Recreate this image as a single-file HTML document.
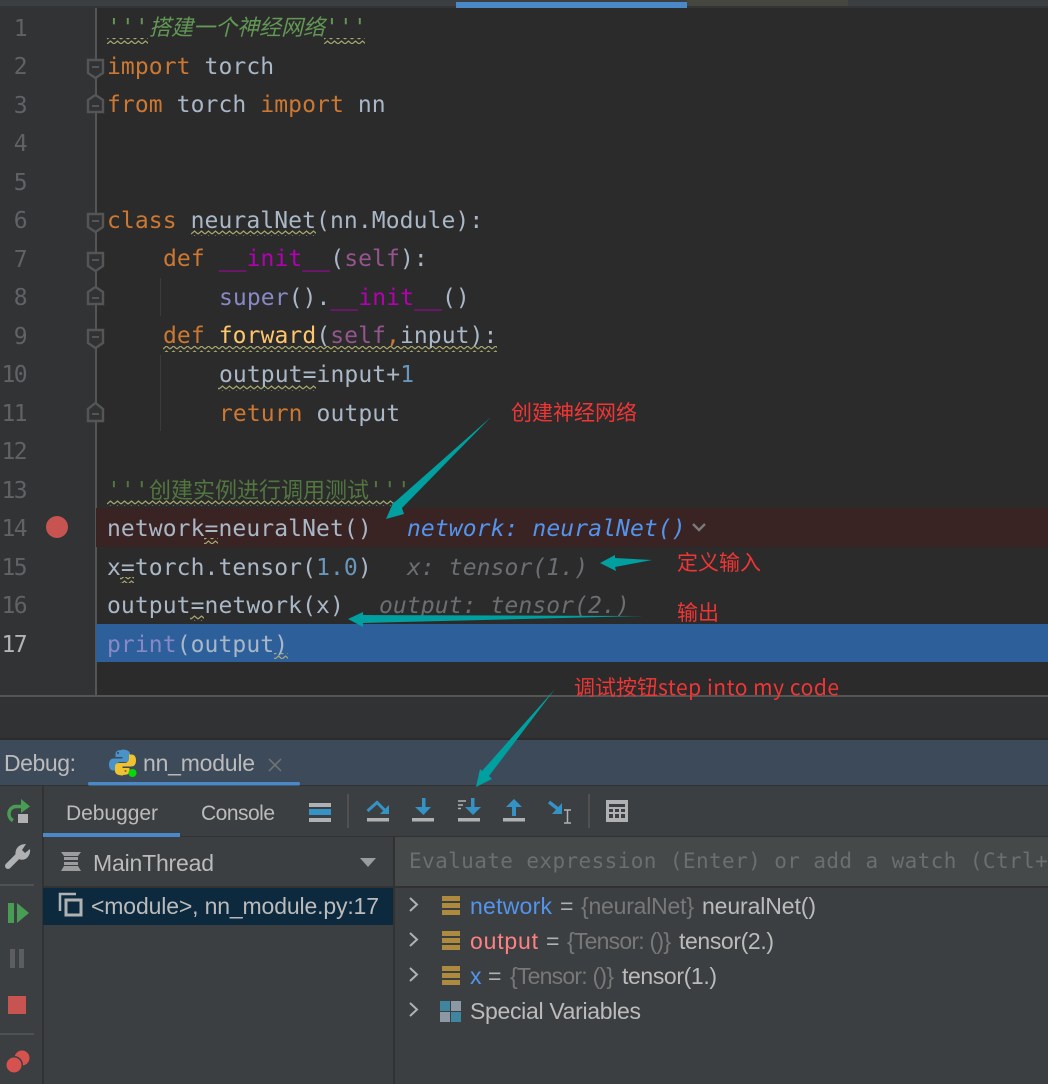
<!DOCTYPE html>
<html><head><meta charset="utf-8"><style>
html,body{margin:0;padding:0;background:#2b2b2b;width:1048px;height:1084px;overflow:hidden}
svg{display:block;position:absolute;left:0;top:0}
.c{font-family:"DejaVu Sans Mono","Noto Sans CJK SC",monospace;font-size:23px;letter-spacing:.09px;fill:#a9b7c6;white-space:pre}
.z{letter-spacing:0;font-size:22px;font-family:"Noto Sans CJK SC",sans-serif}
.k{fill:#cc7832}.m{fill:#b200b2}.s{fill:#94558d}.b{fill:#8888c6}.n{fill:#6897bb}.f{fill:#ffc66d}
.ln{font-family:"DejaVu Sans Mono",monospace;font-size:23px;letter-spacing:-1.6px;fill:#606366;text-anchor:end}
.u{font-family:"Liberation Sans",sans-serif;font-size:23px;fill:#bbbbbb}
.a{font-family:"Noto Sans CJK SC",sans-serif;font-size:21px;fill:#f03535}
.h{font-family:"DejaVu Sans Mono",monospace;font-size:23px;font-style:italic;letter-spacing:.09px;fill:#6b6f72;white-space:pre}
</style></head><body>
<svg width="1048" height="1084" viewBox="0 0 1048 1084" xmlns="http://www.w3.org/2000/svg">
<defs>
<pattern id="w" width="7" height="5" patternUnits="userSpaceOnUse" x="107"><path d="M0 4L3.5 1L7 4" fill="none" stroke="#a8a870" stroke-width="1.2"/></pattern>
</defs>
<!-- base -->
<rect width="1048" height="1084" fill="#2b2b2b"/>
<rect width="1048" height="6" fill="#3c3f41"/>
<rect y="6" width="1048" height="2" fill="#333537"/>
<rect x="687" y="0" width="161" height="6" fill="#46473f"/>
<rect x="456" y="2" width="231" height="6" fill="#4a88c7"/>
<rect y="8" width="95" height="687" fill="#313335"/>
<rect x="95" y="8" width="2" height="687" fill="#555555"/>

<!-- highlights -->
<rect x="96" y="508" width="952" height="39" fill="#3a2323"/>
<rect x="96" y="624" width="952" height="38" fill="#2d5f9a"/>
<rect x="160" y="278" width="1" height="38" fill="#3b3b3b"/>
<rect x="160" y="355" width="1" height="76" fill="#3b3b3b"/>

<!-- line numbers -->
<text class="ln" x="26" y="36">1</text><text class="ln" x="26" y="74">2</text><text class="ln" x="26" y="113">3</text><text class="ln" x="26" y="151">4</text><text class="ln" x="26" y="190">5</text><text class="ln" x="26" y="228">6</text><text class="ln" x="26" y="267">7</text><text class="ln" x="26" y="305">8</text><text class="ln" x="26" y="344">9</text>
<text class="ln" x="26" y="382">10</text><text class="ln" x="26" y="421">11</text><text class="ln" x="26" y="459">12</text><text class="ln" x="26" y="498">13</text><text class="ln" x="26" y="536">14</text><text class="ln" x="26" y="575">15</text><text class="ln" x="26" y="613">16</text><text class="ln" x="26" y="652" style="fill:#b4b4b4">17</text>
<circle cx="57" cy="527" r="11" fill="#c75450"/>

<!-- folds -->
<g fill="#303233" stroke="#555555" stroke-width="2.4">
<path d="M88 60H103V73L95.500 78L88 73Z"/><path d="M88 112H103V100L95.500 95L88 100Z"/>
<path d="M88 214H103V227L95.500 232L88 227Z"/><path d="M88 253H103V266L95.500 271L88 266Z"/>
<path d="M88 304H103V292L95.500 287L88 292Z"/><path d="M88 330H103V343L95.500 348L88 343Z"/>
<path d="M88 421H103V409L95.500 403L88 409Z"/>
<path d="M92 67h7M92 106h7M92 221h7M92 260h7M92 298h7M92 337h7M92 414h7" stroke-width="2"/>
</g>

<!-- squiggles -->
<g fill="url(#w)">
<rect x="107" y="38" width="41" height="6"/><rect x="324" y="38" width="41" height="6"/>
<rect x="191" y="230" width="125" height="6"/><rect x="163" y="346" width="334" height="6"/>
<rect x="218" y="385" width="98" height="6"/><rect x="107" y="500" width="291" height="6"/>
<rect x="204" y="538" width="14" height="6"/><rect x="120" y="577" width="14" height="6"/>
<rect x="190" y="615" width="14" height="6"/><rect x="274" y="653" width="14" height="6"/>
</g>

<!-- code -->
<text class="c" x="107" y="35" style="fill:#629755;font-style:italic">'''<tspan class="z" x="149">搭建一个神经网络</tspan><tspan x="325">'''</tspan></text>
<text class="c" x="107" y="74"><tspan class="k">import</tspan> torch</text>
<text class="c" x="107" y="112"><tspan class="k">from</tspan> torch <tspan class="k">import</tspan> nn</text>
<text class="c" x="107" y="228"><tspan class="k">class</tspan> neuralNet(nn.Module):</text>
<text class="c" x="163" y="266"><tspan class="k">def</tspan> <tspan class="m">__init__</tspan>(<tspan class="s">self</tspan>):</text>
<text class="c" x="219" y="305"><tspan class="b">super</tspan>().<tspan class="m">__init__</tspan>()</text>
<text class="c" x="163" y="343"><tspan class="k">def</tspan> <tspan class="f">forward</tspan>(<tspan class="s">self</tspan><tspan class="k">,</tspan>input):</text>
<text class="c" x="219" y="382">output=input+<tspan class="n">1</tspan></text>
<text class="c" x="219" y="421"><tspan class="k">return</tspan> output</text>
<text class="c" x="107" y="498" style="fill:#52763f">'''<tspan class="z" x="149">创建实例进行调用测试</tspan><tspan x="369">'''</tspan></text>
<text class="c" x="107" y="536">network=neuralNet()</text>
<text class="c" x="107" y="575">x=torch.tensor(<tspan class="n">1.0</tspan>)</text>
<text class="c" x="107" y="613">output=network(x)</text>
<text class="c" x="107" y="652"><tspan class="b">print</tspan>(output)</text>

<!-- hints -->
<text class="h" x="407" y="536" style="fill:#5394ec">network: neuralNet()</text>
<text class="h" x="407" y="575">x: tensor(1.)</text>
<text class="h" x="379" y="613">output: tensor(2.)</text>
<path d="M693 524L699 530L705 524" fill="none" stroke="#7a7a7a" stroke-width="2.4"/>

<!-- lower band -->
<rect y="695" width="1048" height="2" fill="#555555"/>
<rect y="697" width="1048" height="41" fill="#313233"/>
<rect y="738" width="1048" height="2" fill="#2b2b2b"/>
<rect y="740" width="1048" height="45" fill="#3d4a5a"/>
<rect y="785" width="1048" height="299" fill="#3c3f41"/>
<rect y="785" width="1048" height="1" fill="#323232"/>
<rect x="42" y="786" width="2" height="298" fill="#323232"/>
<rect x="393" y="837" width="2" height="247" fill="#323232"/>
<rect x="44" y="836" width="1004" height="1" fill="#323232"/>
<rect x="395" y="837" width="653" height="49" fill="#45494a"/>
<rect x="44" y="886" width="1004" height="2" fill="#323232"/>
<rect x="43" y="888" width="350" height="37" fill="#0d293e"/>

<!-- Debug header -->
<text class="u" x="4" y="771" textLength="72">Debug:</text>
<rect x="88" y="782" width="212" height="3.500" rx="1.500" fill="#4a88c7"/>
<path d="M122 750c-6 0-6.500 2.500-6.500 4.500v2.500h7v1.500h-8.500c-4 0-5 3-5 6s1 6 4.500 6h2.500v-4c0-3 2-4.500 4.500-4.500h6c2 0 3.500-1.500 3.500-3.500v-4.500c0-2.500-2.500-4.500-8-4.500z" fill="#4a93c9"/>
<path d="M123 775c6 0 6.500-2.500 6.500-4.500v-2.500h-7v-1.500h8.500c4 0 5-3 5-6s-1-6-4.500-6h-2.500v4c0 3-2 4.500-4.500 4.500h-6c-2 0-3.500 1.500-3.500 3.500v4.500c0 2.500 2.500 4.500 8 4.500z" fill="#f0c22f"/>
<circle cx="118" cy="753" r="1" fill="#2b4a63"/>
<circle cx="125.500" cy="771" r="1" fill="#7d6715"/>
<circle cx="132.500" cy="773" r="4" fill="#08d808"/>
<text class="u" x="143" y="771" textLength="112">nn_module</text>
<path d="M269 759L281 771M281 759L269 771" stroke="#6f7274" stroke-width="1.600"/>

<!-- Left tool stripe -->
<path d="M22 806.500H15A7.500 7.500 0 0 0 13 820.500" fill="none" stroke="#499c54" stroke-width="3.500"/>
<path d="M21 799L30 806.500L21 813Z" fill="#499c54"/>
<rect x="18" y="814" width="10" height="9" fill="#afb1b3"/>
<path d="M8 866L19 855" stroke="#afb1b3" stroke-width="6" stroke-linecap="round"/>
<path d="M16 857C14 850 18 844 26 844L22 850L25 853L30 849C31 856 25 862 19 859Z" fill="#afb1b3"/>
<rect y="884" width="34" height="2" fill="#515151"/>
<rect x="8" y="903" width="6" height="20" fill="#499c54"/>
<path d="M17 903L29 913L17 923Z" fill="#499c54"/>
<rect x="10" y="949" width="5" height="19" fill="#5b5d5f"/><rect x="19" y="949" width="5" height="19" fill="#5b5d5f"/>
<rect x="8" y="996" width="18" height="18" fill="#c75450"/>
<rect y="1033" width="34" height="2" fill="#515151"/>
<circle cx="22" cy="1058" r="7.500" fill="#d5524e"/>
<circle cx="14" cy="1065" r="9" fill="#3c3f41"/>
<circle cx="14" cy="1065" r="7.500" fill="#d5524e"/>

<!-- Tabs -->
<text class="u" x="66" y="820" textLength="92" style="font-size:21px">Debugger</text>
<rect x="43" y="833" width="137" height="4" fill="#4a88c7"/>
<text class="u" x="201" y="820" textLength="74" style="font-size:21px">Console</text>
<rect x="309" y="803" width="22" height="4" fill="#afb1b3"/><rect x="309" y="809" width="22" height="6" fill="#3592c4"/><rect x="309" y="818" width="22" height="4" fill="#afb1b3"/>
<rect x="347" y="794" width="2" height="34" fill="#515151"/>

<!-- step over -->
<path d="M367.500 811L377 802.500L385.500 811" fill="none" stroke="#3592c4" stroke-width="3"/>
<path d="M389 805V814H380Z" fill="#3592c4"/><rect x="367" y="818" width="22" height="3.500" fill="#afb1b3"/>
<!-- step into -->
<rect x="422" y="798" width="3.500" height="10" fill="#3592c4"/><path d="M415 807H431L423.500 815Z" fill="#3592c4"/><rect x="412" y="818" width="22" height="3.500" fill="#afb1b3"/>
<!-- force into -->
<rect x="471" y="798" width="3.500" height="10" fill="#3592c4"/><path d="M465 807H481L473 815Z" fill="#3592c4"/><rect x="458" y="818" width="22" height="3.500" fill="#afb1b3"/>
<path d="M458 801h8M458 805h5M458 808.500h3" stroke="#afb1b3" stroke-width="1.500"/>
<!-- step out -->
<path d="M506 807H522L514 799Z" fill="#3592c4"/><rect x="512" y="807" width="4" height="9" fill="#3592c4"/><rect x="503" y="818" width="22" height="3.500" fill="#afb1b3"/>
<!-- run to cursor -->
<path d="M549 802L558 809" stroke="#3592c4" stroke-width="3.500"/><path d="M562 803V814H552Z" fill="#3592c4"/>
<path d="M564 810h7M564 823h7M567.500 810v13" fill="none" stroke="#afb1b3" stroke-width="1.500"/>
<rect x="588" y="794" width="2" height="34" fill="#515151"/>
<!-- calculator -->
<rect x="606" y="800" width="22" height="22" fill="#afb1b3"/>
<rect x="609" y="804" width="16" height="3" fill="#3c3f41"/>
<g fill="#3c3f41"><rect x="609" y="809" width="4" height="3"/><rect x="615" y="809" width="4" height="3"/><rect x="621" y="809" width="4" height="3"/><rect x="609" y="814" width="4" height="4"/><rect x="615" y="814" width="4" height="4"/><rect x="621" y="814" width="4" height="4"/></g>

<!-- Thread -->
<path d="M61 852H81L78 856H64Z" fill="#9a9c9e"/><rect x="64" y="857" width="14" height="3" fill="#9a9c9e"/><rect x="64" y="862" width="14" height="3" fill="#9a9c9e"/><path d="M64 866H78L81 871H61Z" fill="#9a9c9e"/>
<text class="u" x="93" y="871" textLength="121">MainThread</text>
<path d="M360 858H376L368 867Z" fill="#9a9c9e"/>
<!-- frame -->
<path d="M60 911V894H76" fill="none" stroke="#afb1b3" stroke-width="2.500"/>
<rect x="66" y="900" width="15" height="15" fill="none" stroke="#afb1b3" stroke-width="3"/>
<text class="u" x="91" y="914" textLength="288">&lt;module&gt;, nn_module.py:17</text>

<!-- Evaluate -->
<text x="409" y="868" style="font-family:'DejaVu Sans Mono',monospace;font-size:21px;letter-spacing:.4px;fill:#6c6f71">Evaluate expression (Enter) or add a watch (Ctrl+</text>

<!-- Vars -->
<path d="M410 898L417 904.500L410 911M410 933L417 939.500L410 946M410 968L417 974.500L410 981M410 1003L417 1009.500L410 1016" fill="none" stroke="#afb1b3" stroke-width="2"/>
<g fill="#ae8a3e">
<rect x="442" y="896" width="18" height="5"/><rect x="442" y="903" width="18" height="5"/><rect x="442" y="910" width="18" height="5"/>
<rect x="442" y="931" width="18" height="5"/><rect x="442" y="938" width="18" height="5"/><rect x="442" y="945" width="18" height="5"/>
<rect x="442" y="966" width="18" height="5"/><rect x="442" y="973" width="18" height="5"/><rect x="442" y="980" width="18" height="5"/>
</g>
<rect x="440" y="1001" width="10" height="10" fill="#40859f"/><rect x="451" y="1001" width="10" height="10" fill="#8c99a4"/><rect x="440" y="1012" width="10" height="10" fill="#8c99a4"/><rect x="451" y="1012" width="10" height="10" fill="#40859f"/>

<text class="u" x="470" y="914" textLength="82" style="fill:#5394ec">network</text>
<text class="u" x="560" y="914" style="fill:#afb1b3">=</text>
<text class="u" x="581" y="914" textLength="113" style="fill:#787878">{neuralNet}</text>
<text class="u" x="702" y="914" textLength="114">neuralNet()</text>

<text class="u" x="470" y="949" textLength="68" style="fill:#ff8080">output</text>
<text class="u" x="546" y="949" style="fill:#afb1b3">=</text>
<text class="u" x="567" y="949" textLength="104" style="fill:#787878">{Tensor: ()}</text>
<text class="u" x="679" y="949" textLength="95">tensor(2.)</text>

<text class="u" x="470" y="984" textLength="10" style="fill:#5394ec">x</text>
<text class="u" x="488" y="984" style="fill:#afb1b3">=</text>
<text class="u" x="510" y="984" textLength="104" style="fill:#787878">{Tensor: ()}</text>
<text class="u" x="622" y="984" textLength="95">tensor(1.)</text>

<text class="u" x="470" y="1019" textLength="171">Special Variables</text>

<!-- Annotation arrows -->
<g fill="#00a0a0">
<path d="M491 417L396 501L393 503L386 519L404 514L402 508Z"/>
<path d="M652 560L615 558L615 555L600 563L616 571L615 567Z"/>
<path d="M643 616L363 615L363 612L348 619L363 627L363 623Z"/>
<path d="M555 689L482 771L480 769L476 787L492 779L489 776Z"/>
</g>
<text class="a" x="511" y="420">创建神经网络</text>
<text class="a" x="677" y="570">定义输入</text>
<text class="a" x="677" y="620">输出</text>
<text class="a" x="574" y="695">调试按钮</text>
<text class="a" x="658" y="695" textLength="181">step into my code</text>
</svg>
</body></html>
